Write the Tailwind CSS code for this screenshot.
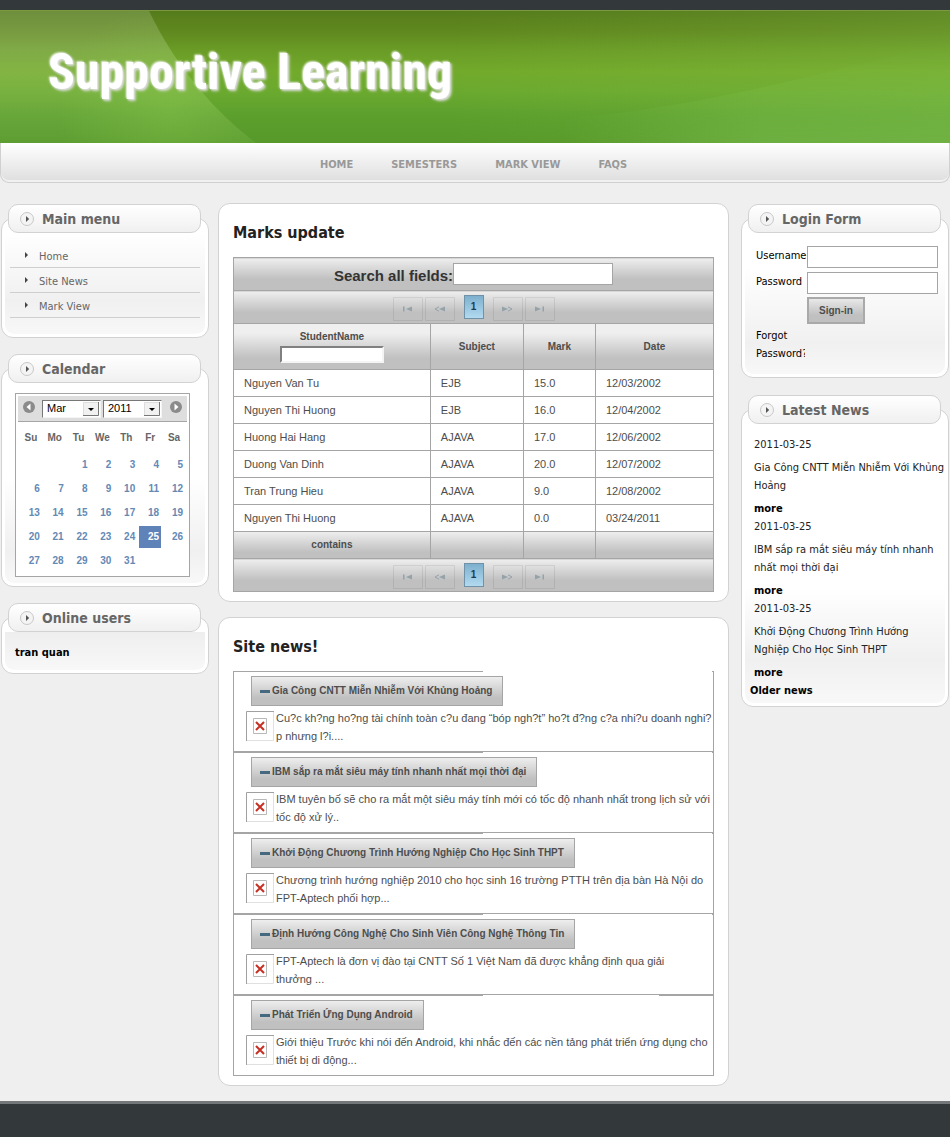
<!DOCTYPE html>
<html lang="vi">
<head>
<meta charset="utf-8">
<title>Supportive Learning</title>
<script src="https://cdn.jsdelivr.net/npm/@tailwindcss/browser@4"></script>
</head>
<body class="flex min-h-screen flex-col bg-[#efefef] font-['DejaVu_Sans_Condensed','DejaVu_Sans',sans-serif] text-[11px] leading-[18px] text-[#222]">

<svg class="hidden" aria-hidden="true">
  <defs>
    <symbol id="bullet" viewBox="0 0 16 16"><circle cx="8" cy="8" r="6.5" fill="#f4f4f4" stroke="#c8c8c8"/><path d="M7 5l3.2 3L7 11z" fill="#555"/></symbol>
    <symbol id="broken" viewBox="0 0 28 30"><path d="M0 0h28v30H0z" fill="#fff"/><path d="M.5 30V.5H28" fill="none" stroke="#a0a0a0"/><path d="M27.500 1v28.500H1" fill="none" stroke="#e0e0e0"/><path d="M7.500 7.500h13v15h-13z" fill="#fff" stroke="#b8b8b8"/><path d="M10 11l8 8M18 11l-8 8" stroke="#c62f22" stroke-width="2"/></symbol>
    <symbol id="first" viewBox="0 0 11 6"><path d="M1 .5h1.500v5H1zM10 .5v5L4 3z" fill="#94a2a9"/></symbol>
    <symbol id="prev" viewBox="0 0 11 6"><path d="M11 .5v5L5 3z" fill="#94a2a9"/><path d="M5 .8L1 3l4 2.200" fill="none" stroke="#94a2a9"/></symbol>
  </defs>
</svg>

<div class="h-[10px] bg-[#33383b]"></div>
<header class="relative h-[133px] overflow-hidden border-t border-[#7b9a3f]">
  <svg class="absolute inset-0 h-full w-full" viewBox="0 0 950 132" preserveAspectRatio="none" aria-hidden="true">
    <defs>
      <linearGradient id="base" x1="0" y1="0" x2="0" y2="1"><stop offset="0" stop-color="#557b1b"/><stop offset=".16" stop-color="#60891f"/><stop offset=".3" stop-color="#6a9c26"/><stop offset=".46" stop-color="#72aa2b"/><stop offset=".62" stop-color="#6aa92f"/><stop offset=".8" stop-color="#5c9f2d"/><stop offset="1" stop-color="#57992a"/></linearGradient>
      <linearGradient id="fold" x1="0" y1="0" x2="0" y2="1"><stop offset="0" stop-color="#fff" stop-opacity=".15"/><stop offset=".3" stop-color="#fff" stop-opacity=".15"/><stop offset=".6" stop-color="#dff0c0" stop-opacity=".12"/><stop offset="1" stop-color="#dff0c0" stop-opacity=".05"/></linearGradient>
      <linearGradient id="side" x1="0" y1="0" x2="1" y2="0"><stop offset="0" stop-color="#93cc58" stop-opacity="0"/><stop offset="1" stop-color="#93cc58" stop-opacity=".2"/></linearGradient>
      <linearGradient id="wave" x1="560" y1="0" x2="760" y2="0" gradientUnits="userSpaceOnUse"><stop offset="0" stop-color="#8fd468" stop-opacity="0"/><stop offset="1" stop-color="#8fd468" stop-opacity=".3"/></linearGradient>
      <linearGradient id="waveEnd" x1="0" y1="0" x2="0" y2="1"><stop offset="0" stop-color="#fff" stop-opacity="0"/><stop offset=".3" stop-color="#fff" stop-opacity=".15"/><stop offset="1" stop-color="#fff"/></linearGradient>
      <mask id="waveMask" maskUnits="userSpaceOnUse" x="450" y="20" width="500" height="112"><path d="M450 20h500v112H450z" fill="url(#waveEnd)"/></mask>
      <radialGradient id="glow" cx="170" cy="100" r="110" gradientUnits="userSpaceOnUse"><stop offset="0" stop-color="#8fd050" stop-opacity=".3"/><stop offset="1" stop-color="#8fd050" stop-opacity="0"/></radialGradient>
    </defs>
    <path d="M0 0h950v132H0z" fill="url(#base)"/>
    <path d="M450 0h500v132H450z" fill="url(#side)"/>
    <path d="M0 0h149C176 56 214 100 256 132H0z" fill="url(#fold)"/>
    <path d="M0 0h149C176 56 214 100 256 132H0z" fill="url(#glow)"/>
    <path d="M560 108C700 96 800 68 950 30V132H500z" fill="url(#wave)" mask="url(#waveMask)"/>
  </svg>
  <h1 class="relative ml-12 mt-[31px] text-[50px] font-bold leading-[60px] whitespace-nowrap text-white font-['Roboto_Condensed','Roboto',sans-serif] [text-shadow:1px_1px_2px_#dddddd,2px_2px_3px_#cfd6c4,-1px_-1px_2px_#e8f0dc]">Supportive Learning</h1>
</header>

<nav class="flex h-[40px] items-center justify-center gap-[38px] rounded-b-[9px] border border-t-0 border-[#d0d0d0] bg-linear-to-b from-white to-[#dedede] pt-1 pr-[3px] text-[11px] font-bold text-[#999] shadow-[inset_0_-2px_0_#f1f1f1]">
  <a href="#">HOME</a><a href="#">SEMESTERS</a><a href="#">MARK VIEW</a><a href="#">FAQS</a>
</nav>

<div class="flex flex-1 items-start pt-5 pb-[15px]">

  <aside class="flex w-[210px] shrink-0 flex-col gap-4 pt-px">
    <section>
      <h2 class="relative ml-2 mr-[9px] flex h-[29px] items-center gap-[7px] rounded-[10px] border border-[#d2d2d2] bg-linear-to-b from-white to-[#f0f0f0] pl-[10px] text-[14px] font-bold text-[#666]"><svg class="size-4"><use href="#bullet"/></svg>Main menu</h2>
      <div class="mx-px -mt-[15px] rounded-[12px] border border-[#d2d2d2] bg-white p-[3px]">
        <ul class="rounded-[9px] bg-linear-to-b from-white from-10% via-[#f0f0f0] via-70% to-[#f8f8f8] px-[5px] pt-[21px] pb-4 text-[#666]">
          <li class="flex h-[25px] items-center gap-[10px] border-b border-[#cfcfcf] pt-1 pl-[14px]"><svg class="mb-1 h-[6px] w-[5px]" viewBox="0 0 5 6"><path d="M1 0v6l3-3z" fill="#444"/></svg><a href="#">Home</a></li>
          <li class="flex h-[25px] items-center gap-[10px] border-b border-[#cfcfcf] pt-1 pl-[14px]"><svg class="mb-1 h-[6px] w-[5px]" viewBox="0 0 5 6"><path d="M1 0v6l3-3z" fill="#444"/></svg><a href="#">Site News</a></li>
          <li class="flex h-[25px] items-center gap-[10px] border-b border-[#cfcfcf] pt-1 pl-[14px]"><svg class="mb-1 h-[6px] w-[5px]" viewBox="0 0 5 6"><path d="M1 0v6l3-3z" fill="#444"/></svg><a href="#">Mark View</a></li>
        </ul>
      </div>
    </section>

    <section>
      <h2 class="relative ml-2 mr-[9px] flex h-[29px] items-center gap-[7px] rounded-[10px] border border-[#d2d2d2] bg-linear-to-b from-white to-[#f0f0f0] pl-[10px] text-[14px] font-bold text-[#666]"><svg class="size-4"><use href="#bullet"/></svg>Calendar</h2>
      <div class="mx-px -mt-[15px] rounded-[12px] border border-[#d2d2d2] bg-white p-[3px]">
        <div class="rounded-[9px] bg-linear-to-b from-white from-50% via-[#f0f0f0] via-85% to-[#f8f8f8] pt-[21px] pr-[15px] pb-[6px] pl-[10px]">
          <div class="border border-[#a5a5a5] bg-white p-[2px] font-['Liberation_Sans',sans-serif]">
            <div class="flex h-[26px] items-center border-b border-[#a5a5a5] bg-[#dedede] px-1">
              <button type="button" class="mb-1" aria-label="Previous month"><svg class="size-[14px]" viewBox="0 0 14 14"><circle cx="7" cy="7" r="6" fill="#8b8b8b"/><path d="M8.500 3.500v7L4.500 7z" fill="#fff"/></svg></button>
              <div class="relative ml-[6px] w-[59px]">
                <select aria-label="Month" class="block h-[18px] w-full appearance-none border border-t-[#777] border-l-[#777] border-r-[#f4f4f4] border-b-[#f4f4f4] bg-white pl-1 text-[11px] leading-[15px] text-black"><option>Mar</option></select>
                <svg class="pointer-events-none absolute top-[2px] right-[2px] h-[14px] w-4" viewBox="0 0 16 14"><path d="M.5 .5h15v13H.5z" fill="#f1f1f1" stroke="#ddd"/><path d="M0 13.500h15.500V0" fill="none" stroke="#777"/><path d="M5 6h6L8 9z"/></svg>
              </div>
              <div class="relative ml-[2px] w-[59px]">
                <select aria-label="Year" class="block h-[18px] w-full appearance-none border border-t-[#777] border-l-[#777] border-r-[#f4f4f4] border-b-[#f4f4f4] bg-white pl-1 text-[11px] leading-[15px] text-black"><option>2011</option></select>
                <svg class="pointer-events-none absolute top-[2px] right-[2px] h-[14px] w-4" viewBox="0 0 16 14"><path d="M.5 .5h15v13H.5z" fill="#f1f1f1" stroke="#ddd"/><path d="M0 13.500h15.500V0" fill="none" stroke="#777"/><path d="M5 6h6L8 9z"/></svg>
              </div>
              <button type="button" class="mb-1 ml-auto" aria-label="Next month"><svg class="size-[14px]" viewBox="0 0 14 14"><circle cx="7" cy="7" r="6" fill="#8b8b8b"/><path d="M5.500 3.500v7l4-3.500z" fill="#fff"/></svg></button>
            </div>
            <table class="w-full table-fixed border-separate border-spacing-[2px] text-right text-[10px] leading-[22px] font-bold text-[#6489b5]">
              <thead class="text-center text-[#666]"><tr class="h-[28px]"><th>Su</th><th>Mo</th><th>Tu</th><th>We</th><th>Th</th><th>Fr</th><th>Sa</th></tr></thead>
              <tbody class="[&_td]:h-[22px] [&_td]:p-0 [&_td]:pr-[2px]">
                <tr><td></td><td></td><td>1</td><td>2</td><td>3</td><td>4</td><td>5</td></tr>
                <tr><td>6</td><td>7</td><td>8</td><td>9</td><td>10</td><td>11</td><td>12</td></tr>
                <tr><td>13</td><td>14</td><td>15</td><td>16</td><td>17</td><td>18</td><td>19</td></tr>
                <tr><td>20</td><td>21</td><td>22</td><td>23</td><td>24</td><td class="bg-[#5f82b8] text-white">25</td><td>26</td></tr>
                <tr><td>27</td><td>28</td><td>29</td><td>30</td><td>31</td><td></td><td></td></tr>
              </tbody>
            </table>
          </div>
        </div>
      </div>
    </section>

    <section>
      <h2 class="relative ml-2 mr-[9px] flex h-[29px] items-center gap-[7px] rounded-[10px] border border-[#d2d2d2] bg-linear-to-b from-white to-[#f0f0f0] pl-[10px] text-[14px] font-bold text-[#666]"><svg class="size-4"><use href="#bullet"/></svg>Online users</h2>
      <div class="mx-px -mt-[15px] rounded-[12px] border border-[#d2d2d2] bg-white px-[3px] pt-[14px] pb-[3px]">
        <p class="rounded-b-[9px] bg-linear-to-b from-[#eeeeee] to-[#f8f8f8] pt-3 pb-2 pl-[10px] font-bold text-black">tran quan</p>
      </div>
    </section>
  </aside>

  <main class="mr-[11px] ml-2 flex min-w-0 flex-1 flex-col gap-[15px]">
    <section class="rounded-[12px] border border-[#d2d2d2] bg-white px-[14px] pt-4 pb-[9px]">
      <h2 class="mb-[12px] text-[16px] font-bold leading-[25px] text-[#222]">Marks update</h2>
      <table class="w-full table-fixed border-collapse font-['Liberation_Sans',sans-serif] text-[10px] leading-[14px] text-[#4d4d4d] [&_td]:border [&_td]:border-[#a5a5a5] [&_th]:border [&_th]:border-[#a5a5a5]">
        <colgroup><col class="w-[41%]"><col class="w-[19.4%]"><col class="w-[15%]"><col></colgroup>
        <thead>
          <tr class="h-[33px]"><th colspan="4" class="bg-linear-to-b from-[#eeeeee] to-[#c0c0c0] to-65%">
            <div class="flex items-center justify-center"><label for="search" class="pt-1 text-[15px] text-[#333]">Search all fields:</label><input id="search" type="text" class="h-[22px] w-40 border border-[#a5a5a5] bg-white px-1"></div></th></tr>
          <tr class="h-[33px]"><td colspan="4" class="bg-linear-to-b from-[#eeeeee] to-[#c0c0c0] to-65%">
            <div class="flex items-center justify-center gap-[2px]">
              <button type="button" aria-label="First" class="mt-1 flex h-6 w-[30px] items-center justify-center border border-black/8"><svg class="h-[6px] w-[11px]"><use href="#first"/></svg></button>
              <button type="button" aria-label="Previous" class="mt-1 flex h-6 w-[30px] items-center justify-center border border-black/8"><svg class="h-[6px] w-[11px]"><use href="#prev"/></svg></button>
              <button type="button" class="mx-[7px] h-6 w-5 border border-[#6f92a8] bg-linear-to-b from-[#7db0ce] to-[#b2daf0] font-bold text-[#1f3b4d]">1</button>
              <button type="button" aria-label="Next" class="mt-1 flex h-6 w-[30px] items-center justify-center border border-black/8"><svg class="h-[6px] w-[11px] rotate-180"><use href="#prev"/></svg></button>
              <button type="button" aria-label="Last" class="mt-1 flex h-6 w-[30px] items-center justify-center border border-black/8"><svg class="h-[6px] w-[11px] rotate-180"><use href="#first"/></svg></button>
            </div></td></tr>
          <tr class="h-[46px] bg-linear-to-b from-[#efefef] from-20% to-[#c0c0c0] to-75%">
            <th><label for="student" class="block">StudentName</label><input id="student" type="text" class="mx-auto mt-[2px] block h-[17px] w-[104px] border-2 border-t-[#808080] border-l-[#808080] border-r-[#f4f4f4] border-b-[#f4f4f4] bg-white"></th>
            <th>Subject</th><th>Mark</th><th>Date</th></tr>
        </thead>
        <tbody class="text-[11px] [&_td]:h-[27px] [&_td]:pl-[10px]">
          <tr><td>Nguyen Van Tu</td><td>EJB</td><td>15.0</td><td>12/03/2002</td></tr>
          <tr><td>Nguyen Thi Huong</td><td>EJB</td><td>16.0</td><td>12/04/2002</td></tr>
          <tr><td>Huong Hai Hang</td><td>AJAVA</td><td>17.0</td><td>12/06/2002</td></tr>
          <tr><td>Duong Van Dinh</td><td>AJAVA</td><td>20.0</td><td>12/07/2002</td></tr>
          <tr><td>Tran Trung Hieu</td><td>AJAVA</td><td>9.0</td><td>12/08/2002</td></tr>
          <tr><td>Nguyen Thi Huong</td><td>AJAVA</td><td>0.0</td><td>03/24/2011</td></tr>
        </tbody>
        <tfoot>
          <tr class="h-[27px] bg-linear-to-b from-[#eeeeee] to-[#c0c0c0] to-75%"><th>contains</th><td></td><td></td><td></td></tr>
          <tr class="h-[33px]"><td colspan="4" class="bg-linear-to-b from-[#eeeeee] to-[#c0c0c0] to-65%">
            <div class="flex items-center justify-center gap-[2px]">
              <button type="button" aria-label="First" class="mt-1 flex h-6 w-[30px] items-center justify-center border border-black/8"><svg class="h-[6px] w-[11px]"><use href="#first"/></svg></button>
              <button type="button" aria-label="Previous" class="mt-1 flex h-6 w-[30px] items-center justify-center border border-black/8"><svg class="h-[6px] w-[11px]"><use href="#prev"/></svg></button>
              <button type="button" class="mx-[7px] h-6 w-5 border border-[#6f92a8] bg-linear-to-b from-[#7db0ce] to-[#b2daf0] font-bold text-[#1f3b4d]">1</button>
              <button type="button" aria-label="Next" class="mt-1 flex h-6 w-[30px] items-center justify-center border border-black/8"><svg class="h-[6px] w-[11px] rotate-180"><use href="#prev"/></svg></button>
              <button type="button" aria-label="Last" class="mt-1 flex h-6 w-[30px] items-center justify-center border border-black/8"><svg class="h-[6px] w-[11px] rotate-180"><use href="#first"/></svg></button>
            </div></td></tr>
        </tfoot>
      </table>
    </section>

    <section class="rounded-[12px] border border-[#d2d2d2] bg-white px-[14px] pt-4 pb-[9px]">
      <h2 class="mb-[12px] text-[16px] font-bold leading-[25px] text-[#222]">Site news!</h2>
      <div class="font-['Liberation_Sans',sans-serif] text-[#4d4d4d]">
        <article class="h-[81px] border-x border-b border-[#a5a5a5]">
          <div class="mb-1 flex h-px justify-between"><span class="w-[249px] bg-[#a5a5a5]"></span><span class="w-px bg-[#a5a5a5]"></span></div>
          <button type="button" class="ml-[17px] flex h-[30px] items-center gap-[2px] border border-[#a5a5a5] bg-linear-to-b from-[#eeeeee] to-[#c0c0c0] to-75% pr-[10px] pl-2 text-[10px] font-bold"><span class="h-[3px] w-[10px] bg-[#456a7f]"></span>Gia Công CNTT Miễn Nhiễm Với Khủng Hoảng</button>
          <div class="mt-[3px] ml-3 flex gap-[2px] text-[11px] whitespace-nowrap"><svg class="mt-[2px] h-[30px] w-7 shrink-0"><use href="#broken"/></svg><p>Cu?c kh?ng ho?ng tài chính toàn c?u đang “bóp ngh?t” ho?t đ?ng c?a nhi?u doanh nghi?<br>p nhưng l?i....</p></div>
        </article>
        <article class="h-[81px] border-x border-b border-[#a5a5a5]">
          <div class="mb-1 flex h-px justify-between"><span class="w-[249px] bg-[#a5a5a5]"></span><span class="w-px bg-[#a5a5a5]"></span></div>
          <button type="button" class="ml-[17px] flex h-[30px] items-center gap-[2px] border border-[#a5a5a5] bg-linear-to-b from-[#eeeeee] to-[#c0c0c0] to-75% pr-[10px] pl-2 text-[10px] font-bold"><span class="h-[3px] w-[10px] bg-[#456a7f]"></span>IBM sắp ra mắt siêu máy tính nhanh nhất mọi thời đại</button>
          <div class="mt-[3px] ml-3 flex gap-[2px] text-[11px] whitespace-nowrap"><svg class="mt-[2px] h-[30px] w-7 shrink-0"><use href="#broken"/></svg><p>IBM tuyên bố sẽ cho ra mắt một siêu máy tính mới có tốc độ nhanh nhất trong lịch sử với<br>tốc độ xử lý..</p></div>
        </article>
        <article class="h-[81px] border-x border-b border-[#a5a5a5]">
          <div class="mb-1 flex h-px justify-between"><span class="w-[249px] bg-[#a5a5a5]"></span><span class="w-px bg-[#a5a5a5]"></span></div>
          <button type="button" class="ml-[17px] flex h-[30px] items-center gap-[2px] border border-[#a5a5a5] bg-linear-to-b from-[#eeeeee] to-[#c0c0c0] to-75% pr-[10px] pl-2 text-[10px] font-bold"><span class="h-[3px] w-[10px] bg-[#456a7f]"></span>Khởi Động Chương Trình Hướng Nghiệp Cho Học Sinh THPT</button>
          <div class="mt-[3px] ml-3 flex gap-[2px] text-[11px] whitespace-nowrap"><svg class="mt-[2px] h-[30px] w-7 shrink-0"><use href="#broken"/></svg><p>Chương trình hướng nghiệp 2010 cho học sinh 16 trường PTTH trên địa bàn Hà Nội do<br>FPT-Aptech phối hợp...</p></div>
        </article>
        <article class="h-[81px] border-x border-b border-[#a5a5a5]">
          <div class="mb-1 flex h-px justify-between"><span class="w-[249px] bg-[#a5a5a5]"></span><span class="w-px bg-[#a5a5a5]"></span></div>
          <button type="button" class="ml-[17px] flex h-[30px] items-center gap-[2px] border border-[#a5a5a5] bg-linear-to-b from-[#eeeeee] to-[#c0c0c0] to-75% pr-[10px] pl-2 text-[10px] font-bold"><span class="h-[3px] w-[10px] bg-[#456a7f]"></span>Định Hướng Công Nghệ Cho Sinh Viên Công Nghệ Thông Tin</button>
          <div class="mt-[3px] ml-3 flex gap-[2px] text-[11px] whitespace-nowrap"><svg class="mt-[2px] h-[30px] w-7 shrink-0"><use href="#broken"/></svg><p>FPT-Aptech là đơn vị đào tại CNTT Số 1 Việt Nam đã được khẳng định qua giải<br>thưởng ...</p></div>
        </article>
        <article class="h-[81px] border-x border-b border-[#a5a5a5]">
          <div class="mb-1 flex h-px justify-between"><span class="w-[249px] bg-[#a5a5a5]"></span><span class="w-[54px] bg-[#a5a5a5]"></span></div>
          <button type="button" class="ml-[17px] flex h-[30px] items-center gap-[2px] border border-[#a5a5a5] bg-linear-to-b from-[#eeeeee] to-[#c0c0c0] to-75% pr-[10px] pl-2 text-[10px] font-bold"><span class="h-[3px] w-[10px] bg-[#456a7f]"></span>Phát Triển Ứng Dụng Android</button>
          <div class="mt-[3px] ml-3 flex gap-[2px] text-[11px] whitespace-nowrap"><svg class="mt-[2px] h-[30px] w-7 shrink-0"><use href="#broken"/></svg><p>Giới thiệu Trước khi nói đến Android, khi nhắc đến các nền tảng phát triển ứng dụng cho<br>thiết bị di động...</p></div>
        </article>
      </div>
    </section>
  </main>

  <aside class="flex w-[210px] shrink-0 flex-col gap-[17px] pt-px">
    <section>
      <h2 class="relative ml-2 mr-[9px] flex h-[29px] items-center gap-[7px] rounded-[10px] border border-[#d2d2d2] bg-linear-to-b from-white to-[#f0f0f0] pl-[10px] text-[14px] font-bold text-[#666]"><svg class="size-4"><use href="#bullet"/></svg>Login Form</h2>
      <div class="mx-px -mt-[15px] rounded-[12px] border border-[#d2d2d2] bg-white p-[3px]">
        <form class="grid grid-cols-[49px_1fr] gap-x-[2px] rounded-[9px] bg-linear-to-b from-white from-30% via-[#f0f0f0] via-80% to-[#f8f8f8] pt-6 pr-[7px] pb-[11px] pl-[11px] text-black">
          <label for="user" class="h-[26px] pt-px">Username</label><input id="user" type="text" class="h-[22px] min-w-0 border border-[#a5a5a5] bg-white px-1">
          <label for="pass" class="h-[25px] pt-px">Password</label><input id="pass" type="password" class="h-[22px] min-w-0 border border-[#a5a5a5] bg-white px-1">
          <button type="button" class="col-start-2 mb-[3px] h-[27px] w-[58px] border-2 border-[#a9a9a9] bg-linear-to-b from-[#e8e8e8] to-[#c0c0c0] to-70% font-['Liberation_Sans',sans-serif] text-[10px] font-bold text-[#4d4d4d]">Sign-in</button>
          <a href="#" class="col-start-1 overflow-hidden">Forgot Password?</a>
        </form>
      </div>
    </section>

    <section>
      <h2 class="relative ml-2 mr-[9px] flex h-[29px] items-center gap-[7px] rounded-[10px] border border-[#d2d2d2] bg-linear-to-b from-white to-[#f0f0f0] pl-[10px] text-[14px] font-bold text-[#666]"><svg class="size-4"><use href="#bullet"/></svg>Latest News</h2>
      <div class="mx-px -mt-[15px] rounded-[12px] border border-[#d2d2d2] bg-white p-[3px]">
        <div class="rounded-[9px] bg-linear-to-b from-white from-60% via-[#f0f0f0] via-85% to-[#f8f8f8] pt-[23px] pb-[3px] pl-[5px]">
          <ul class="pl-1">
            <li><time datetime="2011-03-25">2011-03-25</time><p class="my-[5px]">Gia Công CNTT Miễn Nhiễm Với Khủng<br>Hoảng</p><a href="#" class="block font-bold text-black">more</a></li>
            <li><time datetime="2011-03-25">2011-03-25</time><p class="my-[5px]">IBM sắp ra mắt siêu máy tính nhanh<br>nhất mọi thời đại</p><a href="#" class="block font-bold text-black">more</a></li>
            <li><time datetime="2011-03-25">2011-03-25</time><p class="my-[5px]">Khởi Động Chương Trình Hướng<br>Nghiệp Cho Học Sinh THPT</p><a href="#" class="block font-bold text-black">more</a></li>
          </ul>
          <a href="#" class="block font-bold text-black">Older news</a>
        </div>
      </div>
    </section>
  </aside>
</div>

<footer class="h-9 border-t-[3px] border-[#747779] bg-[#33383b]"></footer>
</body>
</html>
